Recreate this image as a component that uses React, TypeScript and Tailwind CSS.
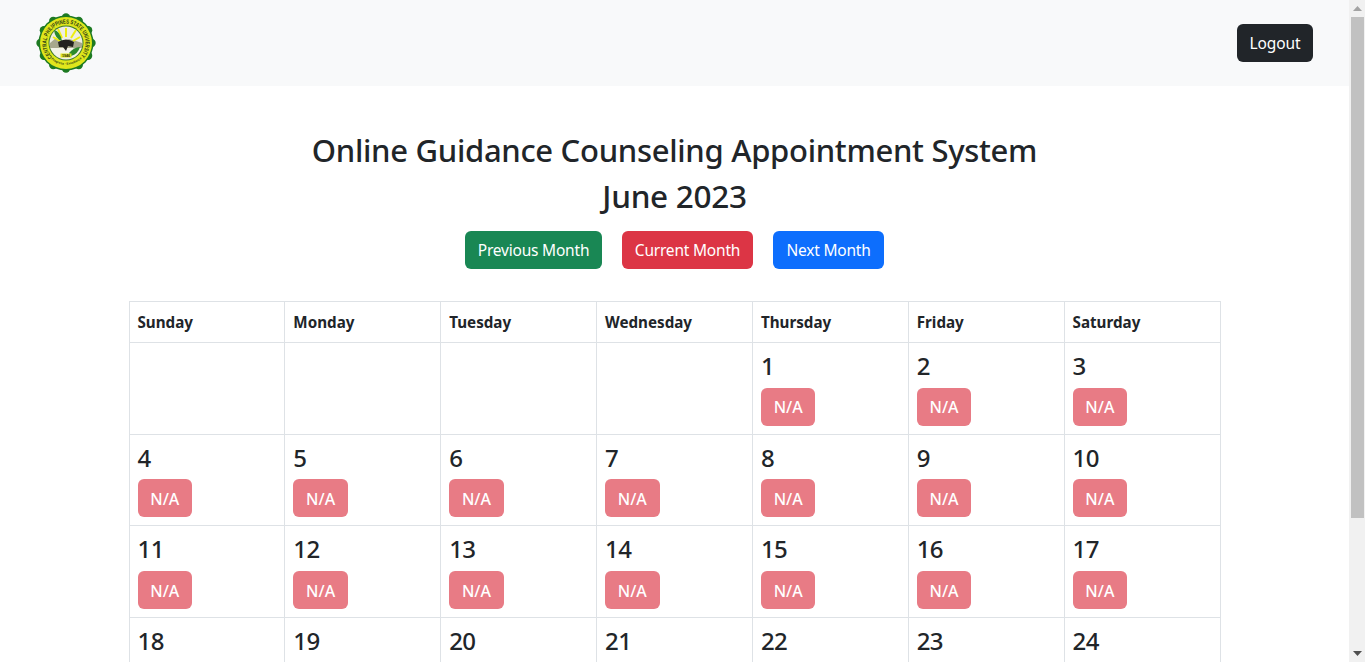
const weekDays = ['Sunday', 'Monday', 'Tuesday', 'Wednesday', 'Thursday', 'Friday', 'Saturday']

// June 2023 starts on a Thursday
const weeks: (number | null)[][] = [
  [null, null, null, null, 1, 2, 3],
  [4, 5, 6, 7, 8, 9, 10],
  [11, 12, 13, 14, 15, 16, 17],
  [18, 19, 20, 21, 22, 23, 24],
  [25, 26, 27, 28, 29, 30, null],
]

function Seal() {
  const bumps = Array.from({ length: 12 }, (_, i) => (i * Math.PI * 2) / 12)
  return (
    <svg width="62" height="62" viewBox="0 0 62 62" className="block">
      <defs>
        <path id="seal-arc" d="M17.2 44.8 A19.5 19.5 0 1 1 44.8 44.8" fill="none" />
        <path id="seal-arc-bottom" d="M14 45 A22.5 22.5 0 0 0 48 45" fill="none" />
      </defs>
      {bumps.map((a) => (
        <circle key={a} cx={31 + 25.5 * Math.cos(a)} cy={31 + 25.5 * Math.sin(a)} r="4.2" fill="#1d7a22" />
      ))}
      <circle cx="31" cy="31" r="27.5" fill="#1d7a22" />
      <circle cx="31" cy="31" r="26" fill="#dfe61c" />
      <circle cx="31" cy="31" r="17.5" fill="#3d7a2a" />
      <circle cx="31" cy="31" r="16.5" fill="#eeeee4" />
      <path d="M15 31 L21 26 L27 30 L34 27 L41 29 L47 31 L47 36 L15 36Z" fill="#a8a88e" />
      <path d="M15.5 36 L46.5 36 A16.5 16.5 0 0 1 15.5 36Z" fill="#f4f4e8" />
      <path d="M31 25 L31 16 M27 26 L23 17 M36 26 L41 18 M25 29 L18 25 M38 29 L45 25" stroke="#eeee10" strokeWidth="2" />
      <path d="M19 18 Q25 19 27 29 Q20 27 19 18Z" fill="#2c8a2c" />
      <path d="M23 30 Q31 25 39 30 L38 35 L33 34 L31 39 L28 35 L24 35Z" fill="#23231f" />
      <path d="M34 41 Q39 35 45 35 Q43 42 36 44Z" fill="#2c8a2c" />
      <rect x="25.5" y="41.5" width="11" height="4" fill="#dfe61c" />
      <text x="31" y="44.8" textAnchor="middle" fontSize="3.6" fontWeight="700" fill="#2a2a14" fontFamily="Liberation Sans, sans-serif">
        1946
      </text>
      <text fontSize="6" fontWeight="700" fill="#2b3a14" fontFamily="Liberation Sans, sans-serif">
        <textPath href="#seal-arc" textLength="90" lengthAdjust="spacingAndGlyphs">
          CENTRAL PHILIPPINES STATE UNIVERSITY
        </textPath>
      </text>
      <text fontSize="3.2" fontWeight="700" fill="#2b3a14" fontFamily="Liberation Sans, sans-serif">
        <textPath href="#seal-arc-bottom" startOffset="8%">Progress · Excellence</textPath>
      </text>
    </svg>
  )
}

function Scrollbar() {
  return (
    <div className="w-4 shrink-0 h-full bg-[#f1f1f1] flex flex-col items-center">
      <div className="h-[17px] flex items-center justify-center shrink-0">
        <svg width="9" height="5" viewBox="0 0 9 5">
          <path d="M4.5 0 L9 5 L0 5Z" fill="#a3a3a3" />
        </svg>
      </div>
      <div className="w-[13px] h-[501px] ml-px bg-[#c1c1c1] shrink-0" />
      <div className="flex-1" />
      <div className="h-[17px] flex items-center justify-center shrink-0">
        <svg width="9" height="5" viewBox="0 0 9 5">
          <path d="M0 0 L9 0 L4.5 5Z" fill="#505050" />
        </svg>
      </div>
    </div>
  )
}

export default function App() {
  return (
    <div className="flex h-[662px] overflow-hidden bg-white text-[#212529] font-['Noto_Sans','Open_Sans',sans-serif]">
      <div className="flex-1 min-w-0 h-full overflow-hidden">
        <nav className="h-[86px] bg-[#f8f9fa] flex items-center justify-between pl-[35px] pr-9">
          <Seal />
          <button className="h-[38px] w-[76px] pt-px rounded-md bg-[#212529] text-white text-[15.5px] tracking-[-0.1px]">
            Logout
          </button>
        </nav>

        <main className="pt-[45px]">
          <h2 className="text-[31px] leading-[38.4px] font-medium tracking-[-0.3px] text-center mb-2">
            Online Guidance Counseling Appointment System
          </h2>
          <h2 className="text-[31.5px] leading-[38.4px] font-medium tracking-[-0.3px] text-center mb-[15px]">
            June 2023
          </h2>

          <div className="flex justify-center gap-5 mb-8">
            <button className="h-[38px] w-[137px] pt-px rounded-md bg-[#198754] text-white text-[15.5px] tracking-[-0.2px] whitespace-nowrap">
              Previous Month
            </button>
            <button className="h-[38px] w-[131px] pt-px rounded-md bg-[#dc3545] text-white text-[15.5px] tracking-[-0.2px] whitespace-nowrap">
              Current Month
            </button>
            <button className="h-[38px] w-[111px] pt-px rounded-md bg-[#0d6efd] text-white text-[15.5px] tracking-[-0.2px] whitespace-nowrap">
              Next Month
            </button>
          </div>

          <table className="w-[1092px] mx-auto table-fixed border-collapse">
            <thead>
              <tr>
                {weekDays.map((day) => (
                  <th key={day} className="border border-[#dee2e6] p-2 text-left text-[15.2px] leading-6 font-bold">
                    {day}
                  </th>
                ))}
              </tr>
            </thead>
            <tbody>
              {weeks.map((week, i) => (
                <tr key={i}>
                  {week.map((date, j) => (
                    <td key={j} className="border border-[#dee2e6] p-2 align-top">
                      {date !== null && (
                        <>
                          <h4 className="text-2xl leading-[30.8px] font-medium tracking-[-0.6px] mb-1.5">{date}</h4>
                          <button className="block h-[38px] w-[54.6px] pt-px rounded-md bg-[#dc3545] opacity-65 text-white text-base font-medium">
                            N/A
                          </button>
                        </>
                      )}
                    </td>
                  ))}
                </tr>
              ))}
            </tbody>
          </table>
        </main>
      </div>
      <Scrollbar />
    </div>
  )
}
